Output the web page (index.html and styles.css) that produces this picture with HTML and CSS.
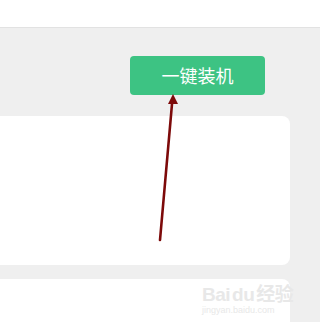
FILE: index.html
```html
<!DOCTYPE html>
<html lang="zh">
<head>
<meta charset="utf-8">
<link rel="stylesheet" href="styles.css">
</head>
<body>
<div class="topbar"></div>
<div class="main">
  <div class="actions">
    <button class="install">一键装机</button>
  </div>
  <div class="card"></div>
  <div class="card card-bottom">
    <div class="watermark">
      <div class="wm-logo">Bai<span class="paw">du</span>经验</div>
      <div class="wm-url">jingyan.baidu.com</div>
    </div>
  </div>
</div>
<svg class="arrow" width="320" height="322" viewBox="0 0 320 322">
  <line x1="160" y1="240" x2="172" y2="104" stroke="#7d0a0a" stroke-width="2.6" stroke-linecap="round"/>
  <polygon points="173,94 168,104 178,104" fill="#7d0a0a"/>
</svg>
</body>
</html>
```
FILE: styles.css
```css
html, body {
  margin: 0;
  padding: 0;
}
body {
  width: 320px;
  height: 322px;
  overflow: hidden;
  background: #efefef;
  font-family: "Noto Sans CJK SC", "Noto Sans", sans-serif;
  position: relative;
}
.topbar {
  height: 27px;
  background: #ffffff;
  border-bottom: 1px solid #e2e2e2;
}
.main {
  display: flex;
  flex-direction: column;
}
.actions {
  display: flex;
  justify-content: flex-end;
  padding: 28px 55px 0 0;
}
.install {
  width: 135px;
  height: 39px;
  border: none;
  border-radius: 4px;
  background: #3dc383;
  color: #ffffff;
  font-family: "Noto Sans CJK SC", sans-serif;
  font-size: 18px;
  line-height: 39px;
  padding: 0;
}
.card {
  margin-top: 21px;
  width: 290px;
  height: 149px;
  background: #ffffff;
  border-radius: 0 8px 8px 0;
}
.card-bottom {
  margin-top: 14px;
  height: 43px;
  border-radius: 0 8px 0 0;
  position: relative;
}
.watermark {
  position: absolute;
  left: 202px;
  top: 6px;
  width: 92px;
  color: #e8e8e8;
  white-space: nowrap;
}
.wm-logo {
  font-family: "Liberation Sans", "Noto Sans CJK SC", sans-serif;
  font-size: 19px;
  font-weight: bold;
  line-height: 20px;
  letter-spacing: -0.5px;
}
.paw {
  margin: 0 2px;
}
.wm-url {
  font-family: "Liberation Sans", sans-serif;
  font-size: 9px;
  line-height: 11px;
}
.arrow {
  position: absolute;
  left: 0;
  top: 0;
  pointer-events: none;
}
```
